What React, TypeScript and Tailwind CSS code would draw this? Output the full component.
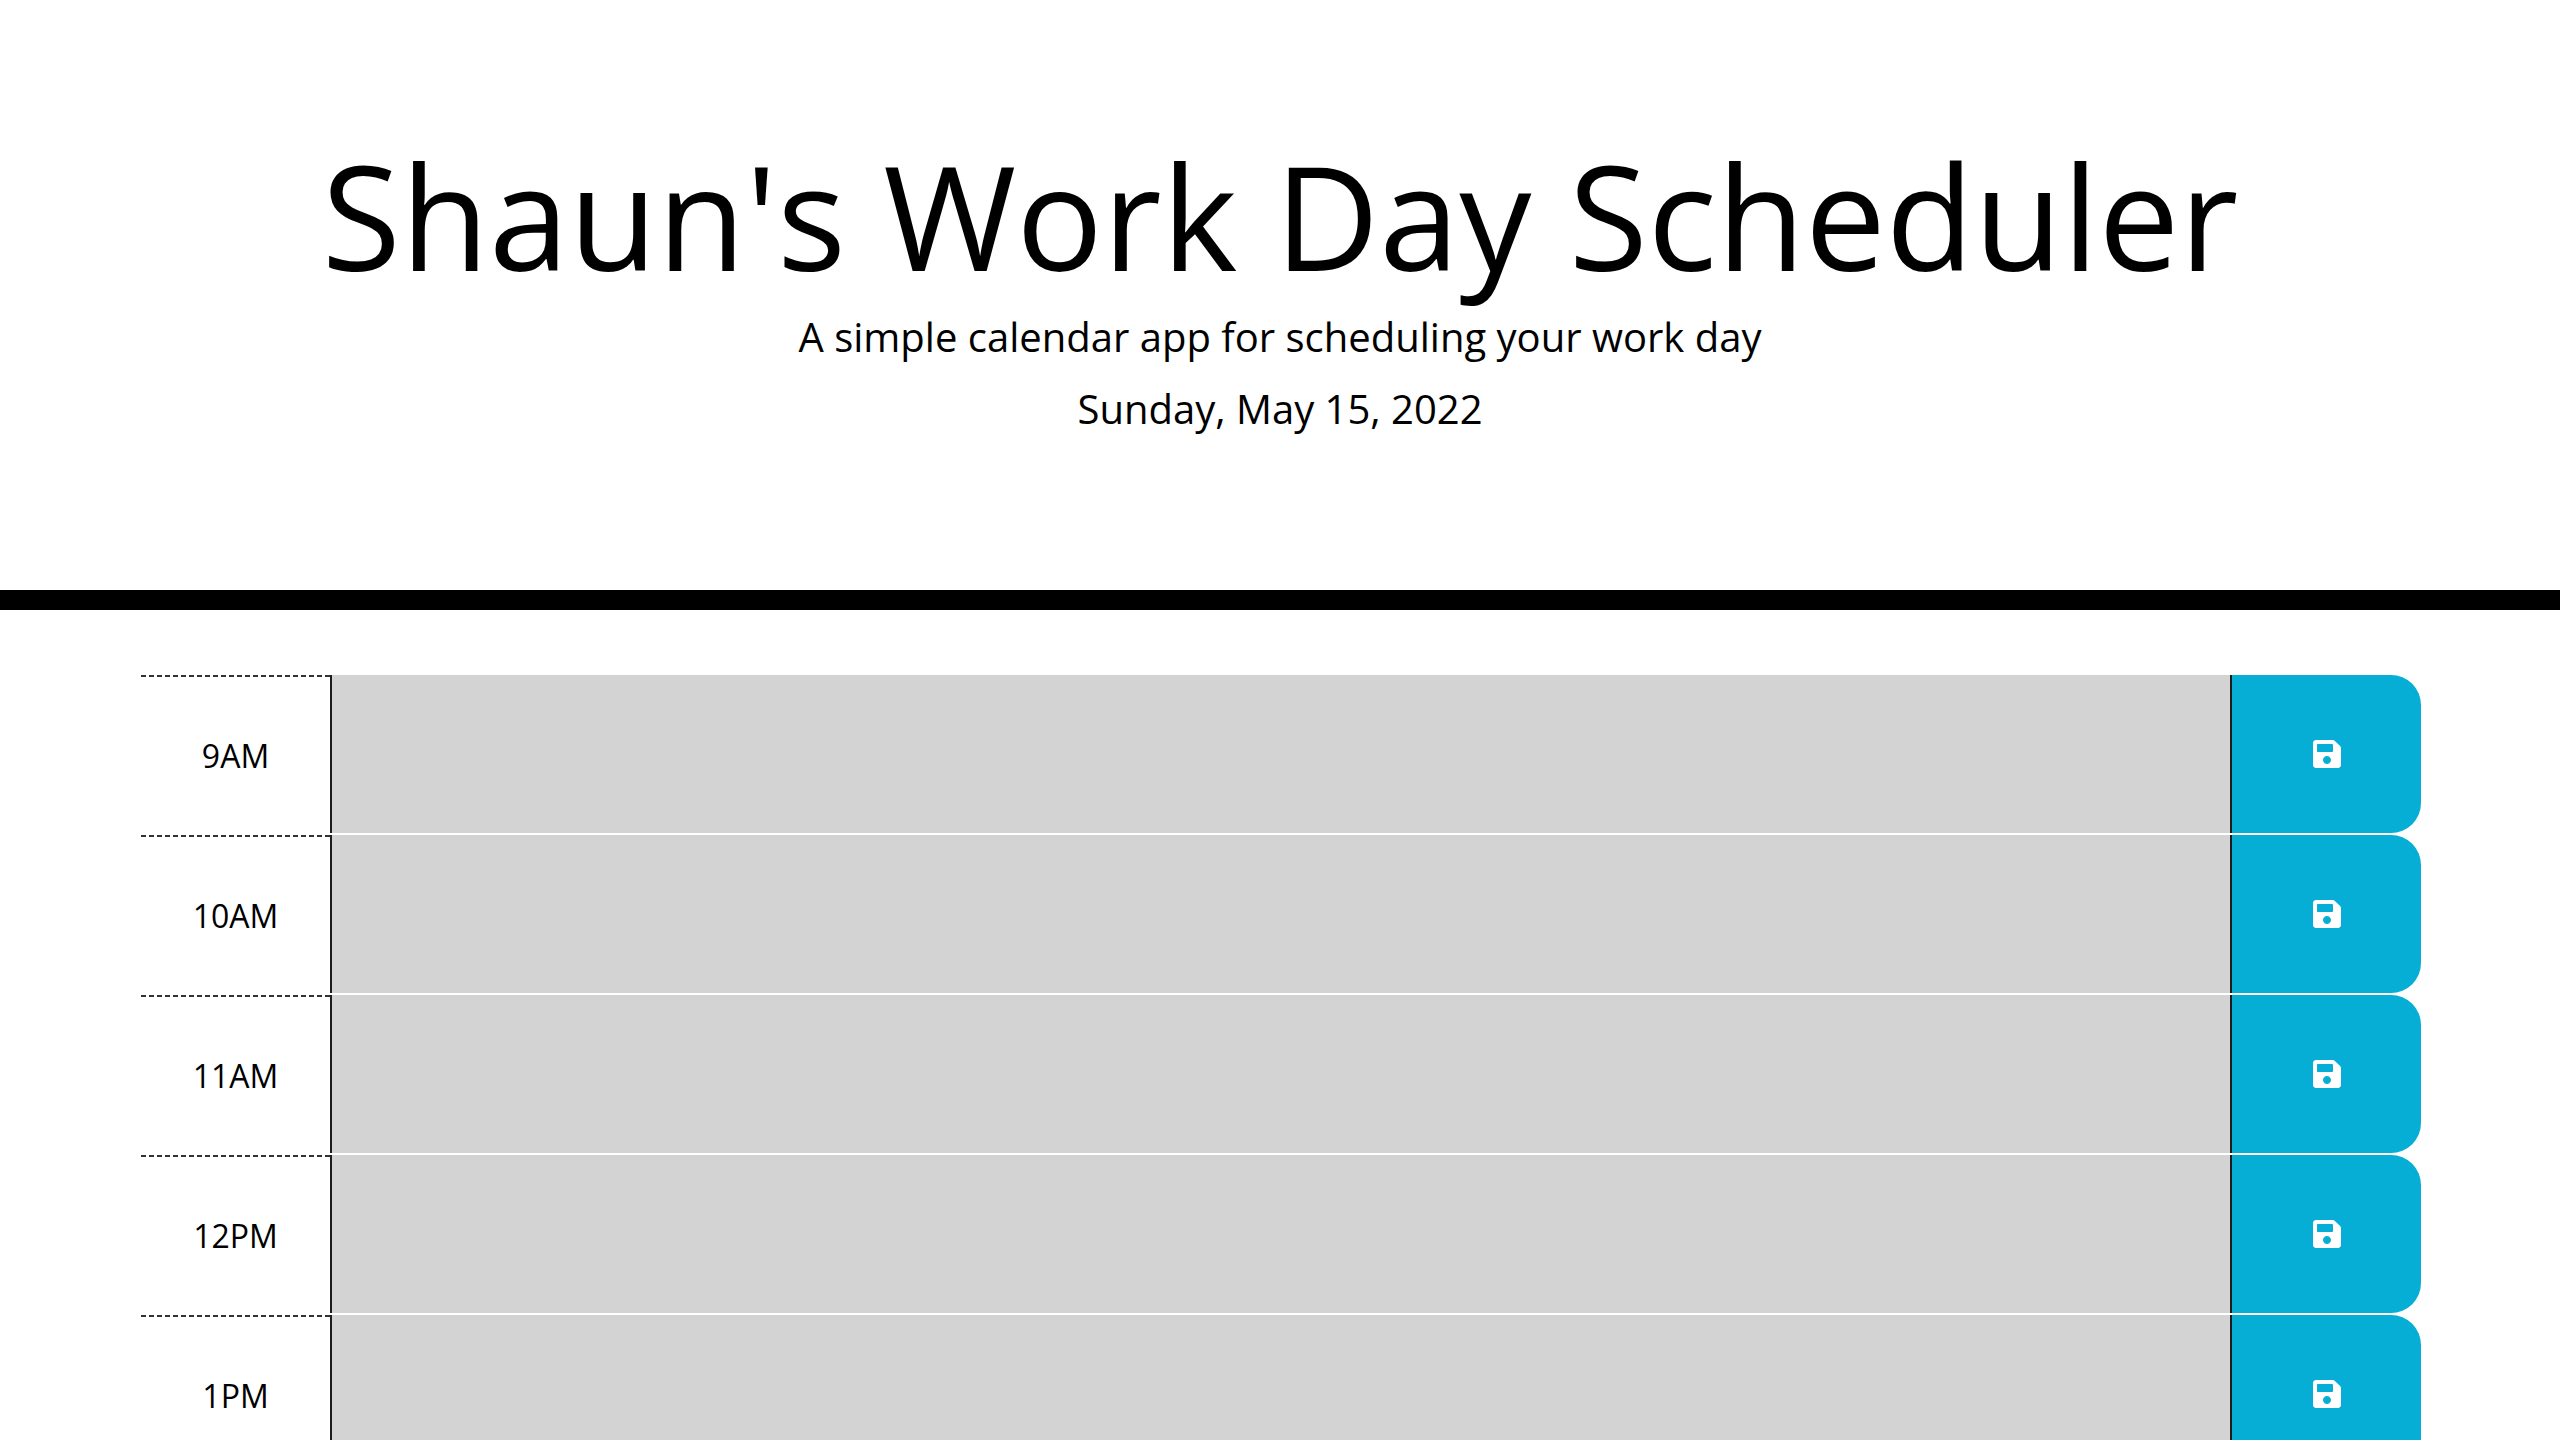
import { FaSave } from "react-icons/fa";

const hours = ["9AM", "10AM", "11AM", "12PM", "1PM"];

function TimeBlock({ hour }: { hour: string }) {
  const id = `task-${hour}`;
  return (
    <form
      className="grid h-[158px] grid-cols-[189fr_1902fr_189fr]"
      onSubmit={(event) => event.preventDefault()}
    >
      <label
        htmlFor={id}
        className="flex items-center justify-center bg-[repeating-linear-gradient(90deg,#333333_0_5px,transparent_5px_8px)] bg-[length:100%_2px] bg-no-repeat pt-1 text-[32px] leading-[48px]"
      >
        {hour}
      </label>
      <textarea
        id={id}
        className="block h-full w-full resize-none border-x-2 border-[#1c1c1c] bg-[#d3d3d3] px-3 text-[32px] outline-none"
      />
      <button
        type="submit"
        aria-label={`Save ${hour}`}
        className="flex items-center justify-center rounded-r-[30px] bg-[#06aed5] text-[32px] text-white"
      >
        <FaSave />
      </button>
    </form>
  );
}

export default function App() {
  return (
    <div className="h-screen overflow-hidden bg-white font-['Open_Sans',sans-serif] text-black">
      <header className="flex flex-col items-center border-b-[20px] border-black pt-[129px] pb-[151px] text-center">
        <h1 className="text-[144px] leading-[172px]">Shaun's Work Day Scheduler</h1>
        <p className="mt-[6px] text-[40px] leading-[60px]">
          A simple calendar app for scheduling your work day
        </p>
        <p className="mt-3 text-[40px] leading-[60px]">Sunday, May 15, 2022</p>
      </header>
      <main className="flex flex-col gap-[2px] pt-[65px] pr-[139px] pl-[141px]">
        {hours.map((hour) => (
          <TimeBlock key={hour} hour={hour} />
        ))}
      </main>
    </div>
  );
}
